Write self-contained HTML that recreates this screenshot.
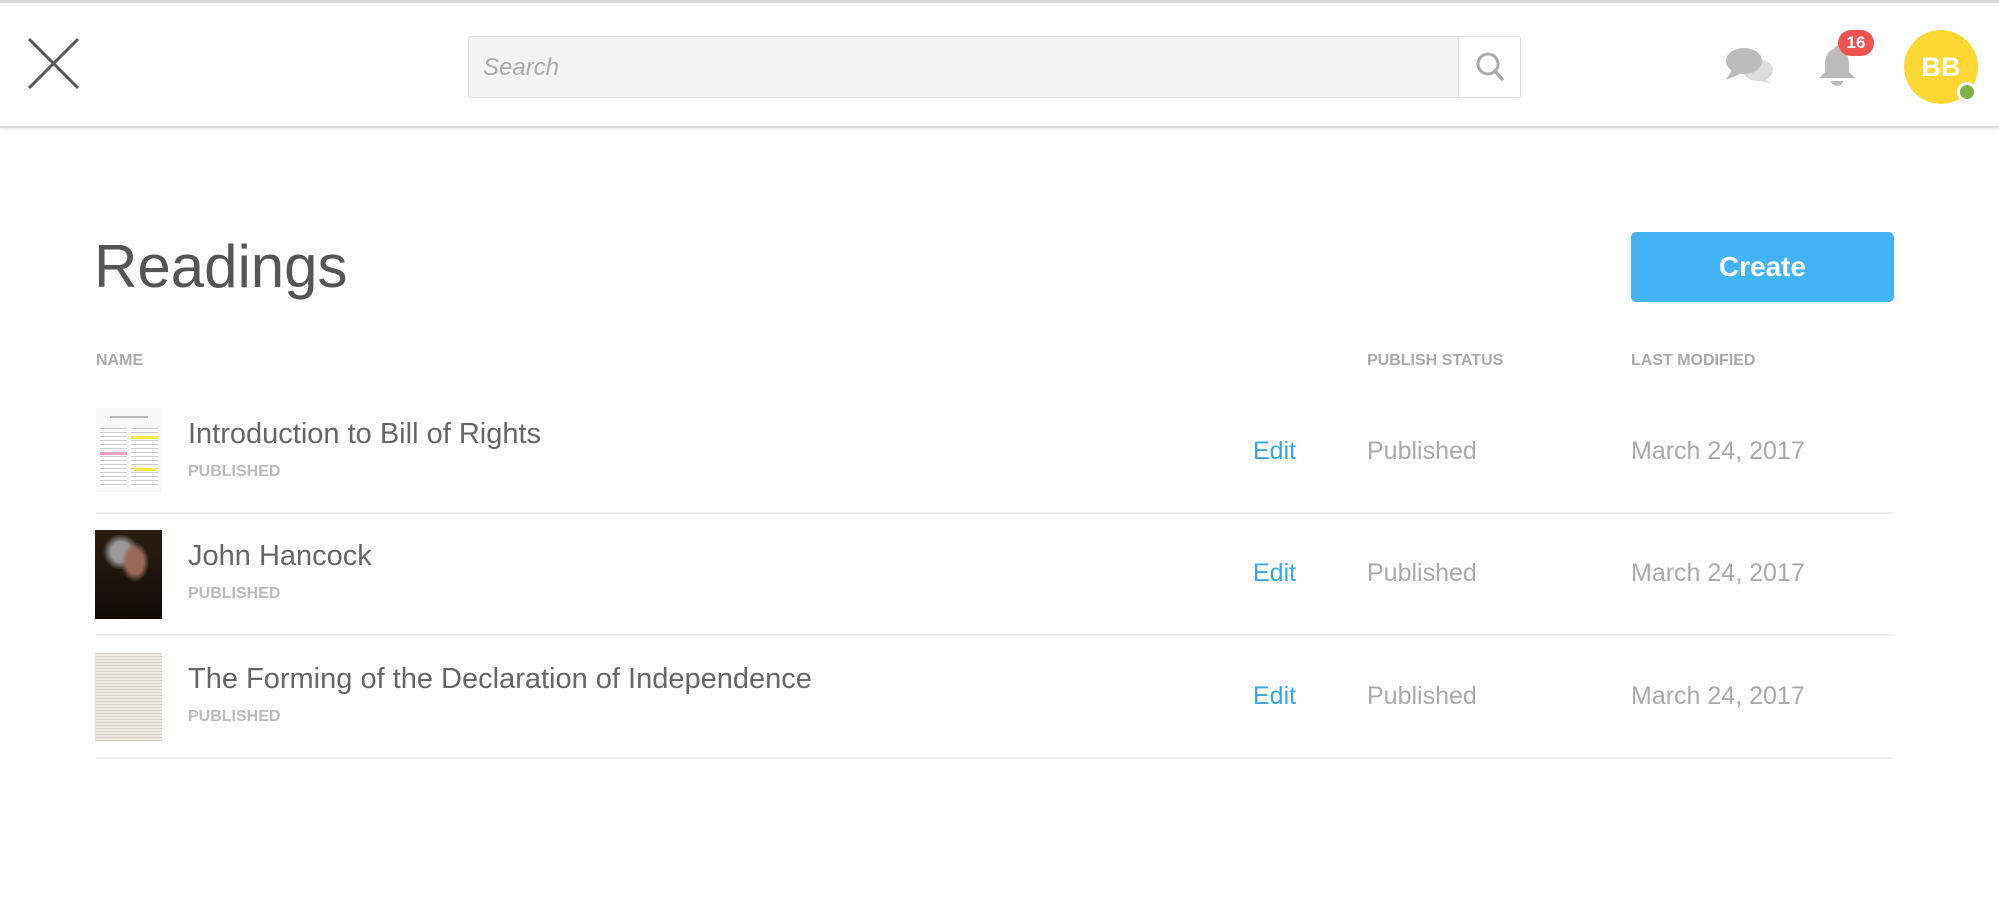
<!DOCTYPE html>
<html><head><meta charset="utf-8"><style>
*{margin:0;padding:0;box-sizing:border-box}
body{width:1999px;height:924px;background:#fff;font-family:"Liberation Sans",sans-serif;position:relative;overflow:hidden}
.abs{position:absolute}
.hdr{left:0;top:0;width:1999px;height:128px;border-top:3px solid #d6d6d6;border-bottom:2px solid #dedede;box-shadow:0 2px 3px rgba(0,0,0,.06)}
.search{left:468px;top:36px;width:1053px;height:62px;background:#f4f4f4;border:1px solid #ddd;border-radius:3px}
.search span{position:absolute;left:14px;top:17px;font-size:24px;font-style:italic;color:#aaa}
.sbtn{position:absolute;right:0;top:0;width:62px;height:60px;background:#fff;border-left:1px solid #e3e3e3}
.row-t{font-size:29px;color:#666}
.pub{font-size:16px;font-weight:bold;color:#bbb}
.col{font-size:16px;font-weight:bold;color:#aaa}
.cell{font-size:25px;color:#aaa}
.edit{font-size:25px;color:#35a7ea}
.sep{left:96px;width:1797px;height:2px;background:#f0f0f0}
</style></head><body>
<div class="abs hdr"></div>
<svg class="abs" style="left:26px;top:36px" width="55" height="55"><path d="M3 3L52 52M52 3L3 52" stroke="#555" stroke-width="3"/></svg>
<div class="abs search"><span>Search</span><div class="sbtn"><svg width="62" height="60"><circle cx="29" cy="27" r="10" fill="none" stroke="#aaa" stroke-width="3"/><path d="M36 34L43 42" stroke="#aaa" stroke-width="3.5" stroke-linecap="round"/></svg></div></div>
<svg class="abs" style="left:1724px;top:46px" width="52" height="40"><ellipse cx="34" cy="24" rx="15" ry="11" fill="#ddd"/><path d="M40 32l8 6-12-3z" fill="#ddd"/><ellipse cx="20" cy="15" rx="18" ry="13" fill="#bbb"/><path d="M8 24l-6 10 14-6z" fill="#bbb"/></svg>
<svg class="abs" style="left:1816px;top:44px" width="42" height="44"><path d="M21 2c-2 0-3 1-3 3-7 2-9 9-9 16v7l-6 6h36l-6-6v-7c0-7-2-14-9-16 0-2-1-3-3-3z" fill="#bbb"/><path d="M15 37a6 5 0 0 0 12 0z" fill="#bbb"/></svg>
<div class="abs" style="left:1838px;top:30px;width:36px;height:26px;border-radius:13px;background:#ef5350;color:#fff;font-size:17px;font-weight:bold;text-align:center;line-height:26px">16</div>
<div class="abs" style="left:1904px;top:30px;width:74px;height:74px;border-radius:50%;background:#fdd835;color:#fff;font-size:27px;font-weight:bold;text-align:center;line-height:74px">BB</div>
<div class="abs" style="left:1957px;top:82px;width:20px;height:20px;border-radius:50%;background:#7cb342;border:3px solid #fff"></div>

<div class="abs" style="left:94px;top:232px;font-size:60px;color:#555">Readings</div>
<div class="abs" style="left:1631px;top:232px;width:263px;height:70px;background:#42b4f5;border-radius:5px;color:#fff;font-size:28px;font-weight:bold;text-align:center;line-height:70px">Create</div>

<div class="abs col" style="left:96px;top:352px">NAME</div>
<div class="abs col" style="left:1367px;top:352px">PUBLISH STATUS</div>
<div class="abs col" style="left:1631px;top:352px">LAST MODIFIED</div>

<!-- row 1 -->
<div class="abs" style="left:96px;top:408px;width:66px;height:84px;background:#f7f7f7;overflow:hidden">
<div style="margin:8px 14px;height:2px;background:#bbb"></div>
<div style="position:absolute;left:4px;top:20px;width:27px;height:60px;background:repeating-linear-gradient(#ccc 0 1px,#fafafa 1px 4px)"></div>
<div style="position:absolute;left:35px;top:20px;width:27px;height:60px;background:repeating-linear-gradient(#ccc 0 1px,#fafafa 1px 4px)"></div>
<div style="position:absolute;left:35px;top:28px;width:27px;height:3px;background:#f3e94a"></div>
<div style="position:absolute;left:4px;top:44px;width:27px;height:3px;background:#e8a0c0"></div>
<div style="position:absolute;left:38px;top:60px;width:22px;height:3px;background:#f3e94a"></div>
</div>
<div class="abs row-t" style="left:188px;top:418px">Introduction to Bill of Rights</div>
<div class="abs pub" style="left:188px;top:463px">PUBLISHED</div>
<div class="abs edit" style="left:1253px;top:437px">Edit</div>
<div class="abs cell" style="left:1367px;top:437px">Published</div>
<div class="abs cell" style="left:1631px;top:437px">March 24, 2017</div>
<div class="abs sep" style="top:512px"></div>

<!-- row 2 -->
<div class="abs" style="left:95px;top:530px;width:67px;height:89px;background:radial-gradient(ellipse 14px 20px at 40px 32px,#9a6a58 0 60%,transparent 100%),radial-gradient(ellipse 18px 18px at 26px 22px,#999 0 55%,transparent 100%),linear-gradient(#2a1d12,#120c08)"></div>
<div class="abs row-t" style="left:188px;top:540px">John Hancock</div>
<div class="abs pub" style="left:188px;top:585px">PUBLISHED</div>
<div class="abs edit" style="left:1253px;top:559px">Edit</div>
<div class="abs cell" style="left:1367px;top:559px">Published</div>
<div class="abs cell" style="left:1631px;top:559px">March 24, 2017</div>
<div class="abs sep" style="top:634px"></div>

<!-- row 3 -->
<div class="abs" style="left:95px;top:653px;width:67px;height:88px;background:repeating-linear-gradient(#d6d0c2 0 1px,#ecebe3 1px 3px)"></div>
<div class="abs row-t" style="left:188px;top:663px">The Forming of the Declaration of Independence</div>
<div class="abs pub" style="left:188px;top:708px">PUBLISHED</div>
<div class="abs edit" style="left:1253px;top:682px">Edit</div>
<div class="abs cell" style="left:1367px;top:682px">Published</div>
<div class="abs cell" style="left:1631px;top:682px">March 24, 2017</div>
<div class="abs sep" style="top:757px"></div>
</body></html>
